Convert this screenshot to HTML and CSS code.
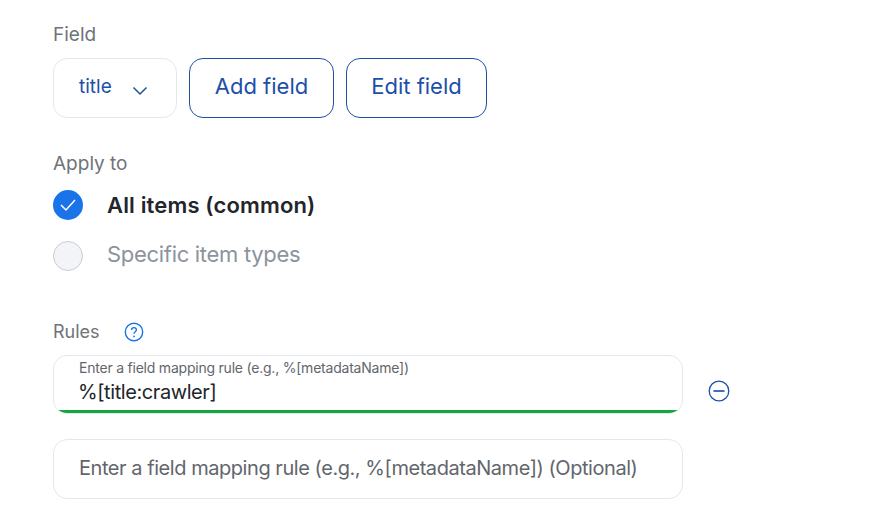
FILE: index.html
```html
<!DOCTYPE html>
<html lang="en">
<head>
    <meta charset="UTF-8">
    <title>Field mapping</title>
    <link rel="stylesheet" href="styles.css">
</head>
<body>
    <div class="form">
        <div class="label">Field</div>
        <div class="field-row">
            <div class="select">
                <span>title</span>
                <svg class="chevron" width="16" height="10" viewBox="0 0 16 10" fill="none"><path d="M1.5 1.5L8 8l6.5-6.5" stroke="#1c4fa8" stroke-width="1.5"/></svg>
            </div>
            <button class="btn btn-add">Add field</button>
            <button class="btn btn-edit">Edit field</button>
        </div>

        <div class="label label-apply">Apply to</div>
        <div class="radio-row">
            <span class="radio radio-on">
                <svg width="18" height="14" viewBox="0 0 18 14" fill="none"><path d="M2 7l5 5 9-10" stroke="#fff" stroke-width="1.5"/></svg>
            </span>
            <span class="radio-text radio-text-on">All items (common)</span>
        </div>
        <div class="radio-row radio-row-off">
            <span class="radio"></span>
            <span class="radio-text">Specific item types</span>
        </div>

        <div class="rules-head">
            <span class="label-rules">Rules</span>
            <svg class="help" width="20" height="20" viewBox="0 0 20 20" fill="none">
                <circle cx="10" cy="10" r="8.7" stroke="#1a73e8" stroke-width="1.4"/>
                <path d="M7.6 8c0-1.5 1-2.4 2.4-2.4s2.4.9 2.4 2.2c0 1.9-2.4 1.9-2.4 3.9" stroke="#1a73e8" stroke-width="1.4"/>
                <circle cx="10" cy="14.4" r=".9" fill="#1a73e8"/>
            </svg>
        </div>
        <div class="rule-row">
            <div class="rule-input rule-filled">
                <div class="rule-hint">Enter a field mapping rule (e.g., %[metadataName])</div>
                <div class="rule-value">%[title:crawler]</div>
            </div>
            <svg class="remove" width="22" height="22" viewBox="0 0 22 22" fill="none">
                <circle cx="11" cy="11" r="9.8" stroke="#1c4fa8" stroke-width="1.3"/>
                <path d="M5.5 11h11" stroke="#3f6fc0" stroke-width="2"/>
            </svg>
        </div>
        <div class="rule-input rule-empty">Enter a field mapping rule (e.g., %[metadataName]) (Optional)</div>
    </div>
</body>
</html>
```

FILE: styles.css
```css
body {
    margin: 0;
    background-color: #fff;
    font-family: 'Inter', Arial, sans-serif;
    color: #22252a;
}

.form {
    padding: 23px 0 0 53px;
}

.label {
    font-size: 19px;
    line-height: 24px;
    color: #6f7378;
}

.field-row {
    display: flex;
    gap: 12px;
    margin-top: 11px;
}

.select {
    width: 124px;
    height: 60px;
    box-sizing: border-box;
    border: 1px solid #e6e7ea;
    border-radius: 14px;
    padding: 0 0 4px 25px;
    display: flex;
    align-items: center;
    font-size: 19px;
    color: #1c4fa8;
}

.chevron {
    margin: 10px 0 0 20px;
}

.btn {
    height: 60px;
    box-sizing: border-box;
    border: 1px solid #1c4fa8;
    border-radius: 14px;
    background-color: #fff;
    color: #1c4fa8;
    font-family: 'Inter', Arial, sans-serif;
    font-size: 22px;
    padding: 0 0 5px;
}

.btn-add {
    width: 145px;
}

.btn-edit {
    width: 141px;
}

.label-apply {
    margin-top: 34px;
}

.radio-row {
    display: flex;
    align-items: center;
    gap: 24px;
    height: 30px;
    margin-top: 14px;
}

.radio-row-off {
    margin-top: 21px;
}

.radio {
    width: 30px;
    height: 30px;
    box-sizing: border-box;
    border: 1px solid #c9ccd2;
    border-radius: 50%;
    background-color: #f3f4f7;
}

.radio-on {
    border: none;
    background-color: #1a73e8;
    display: flex;
    align-items: center;
    justify-content: center;
}

.radio-text {
    font-size: 22px;
    letter-spacing: -0.3px;
    padding-bottom: 4px;
    color: #8c939c;
}

.radio-text-on {
    font-weight: 600;
    letter-spacing: 0.15px;
    padding-bottom: 0;
    color: #22252a;
}

.rules-head {
    display: flex;
    align-items: center;
    gap: 24px;
    height: 24px;
    margin-top: 48px;
}

.label-rules {
    font-size: 18px;
    color: #6f7378;
}

.help {
    margin-top: 2px;
}

.rule-row {
    display: flex;
    align-items: center;
    gap: 25px;
    margin-top: 12px;
}

.remove {
    margin-top: 13px;
}

.rule-input {
    width: 630px;
    box-sizing: border-box;
    border: 1px solid #e6e7ea;
    border-radius: 14px;
    padding-left: 25px;
}

.rule-filled {
    height: 59px;
    position: relative;
    overflow: hidden;
    padding-top: 3px;
}

.rule-filled::after {
    content: "";
    position: absolute;
    left: 0;
    right: 0;
    bottom: 0;
    height: 3px;
    background-color: #12a644;
}

.rule-hint {
    font-size: 14px;
    line-height: 18px;
    letter-spacing: -0.22px;
    color: #62666c;
}

.rule-value {
    font-size: 20px;
    line-height: 26px;
    letter-spacing: -0.42px;
    margin: 2px 0 0 -1px;
    color: #22252a;
}

.rule-empty {
    height: 60px;
    margin-top: 25px;
    padding-bottom: 2px;
    display: flex;
    align-items: center;
    font-size: 20px;
    letter-spacing: -0.45px;
    color: #62666c;
}
```
